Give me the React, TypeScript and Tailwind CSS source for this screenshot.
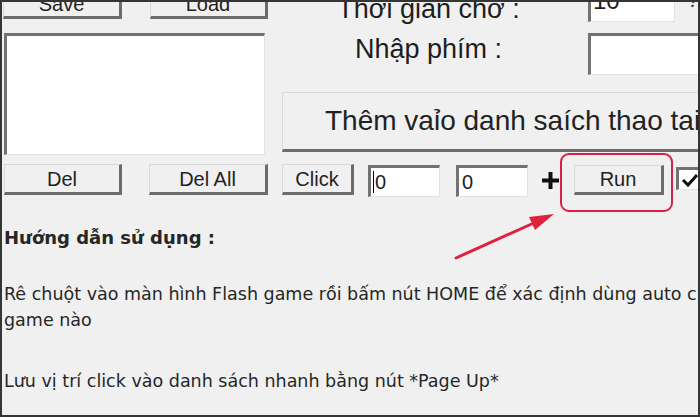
import type { ReactNode } from "react";

const raised =
  "shrink-0 flex items-center justify-center bg-[#f0f0f0] border-t border-l border-t-[#d9d9d9] border-l-[#d9d9d9] border-r-[3px] border-b-[3px] border-r-[#6c6c6c] border-b-[#6c6c6c] text-[20px] text-[#222]";
const sunken =
  "shrink-0 flex items-center bg-white border-t-[3px] border-l-[3px] border-t-[#727272] border-l-[#727272] border-r border-b border-r-[#e2e2e2] border-b-[#e2e2e2]";

function Btn({ className, children }: { className: string; children?: ReactNode }) {
  return <div className={`${raised} ${className}`}>{children}</div>;
}

function Field({ className, children }: { className: string; children?: ReactNode }) {
  return <div className={`${sunken} ${className}`}>{children}</div>;
}

export default function App() {
  return (
    <div className="relative w-[700px] h-[417px] overflow-hidden bg-[#f0f0f0] border-2 border-[#353535] font-['Liberation_Sans',Arial,sans-serif] text-[#1d1d1d]">
      {/* top block */}
      <div className="flex items-start mt-[-22px]">
        <div className="ml-[1px] w-[265px] shrink-0 pt-[8px] flex flex-col">
          <div className="flex gap-[28px] h-[31px]">
            <Btn className="w-[119px] h-[31px] items-start">Save</Btn>
            <Btn className="w-[118px] h-[31px] items-start">Load</Btn>
          </div>
          <Field className="mt-[14px] ml-[1px] w-[261px] h-[122px]" />
        </div>

        <div className="ml-[14px] w-[440px] shrink-0 flex flex-col">
          <div className="flex items-center h-[42px]">
            <div className="w-[293px] shrink-0 text-center text-[27px] leading-none pt-[16px]">Thời gian chờ :</div>
            <Field className="ml-[13px] w-[87px] h-[42px] pl-[2px] text-[24px] items-end pb-[2px]">10</Field>
            <span className="ml-[13px] text-[22px] italic text-[#333] self-end pb-[6px]">?</span>
          </div>
          <div className="flex items-center h-[42px] mt-[11px]">
            <div className="w-[293px] shrink-0 text-center text-[27px] leading-none pb-[10px]">Nhập phím :</div>
            <Field className="ml-[13px] w-[112px] h-[42px]" />
          </div>
          <Btn className="mt-[17px] h-[60px] w-[440px] justify-start pl-[42px] text-[28px] whitespace-nowrap">
            Thêm vaỉo danh saích thao taic
          </Btn>
        </div>
      </div>

      {/* control row */}
      <div className="flex items-start mt-[9px] ml-[2px]">
        <Btn className="w-[118px] h-[31px]">Del</Btn>
        <Btn className="ml-[27px] w-[119px] h-[31px]">Del All</Btn>
        <Btn className="ml-[14px] w-[72px] h-[31px]">Click</Btn>
        <Field className="ml-[14px] mt-[1px] w-[72px] h-[32px] pl-[2px] text-[20px]">
          <span className="w-[1px] h-[22px] bg-black mr-[1px]" />0
        </Field>
        <Field className="ml-[16px] mt-[1px] w-[72px] h-[32px] pl-[3px] text-[20px]">0</Field>
        <svg className="ml-[14px] mt-[8px] shrink-0" width="17" height="17" viewBox="0 0 17 17">
          <rect x="0" y="6.5" width="17" height="4" fill="#111" />
          <rect x="6.5" y="0" width="4" height="17" fill="#111" />
        </svg>
        <Btn className="ml-[15px] mt-[1px] w-[90px] h-[30px]">Run</Btn>
        <Field className="ml-[12px] mt-[3px] w-[30px] h-[23px]">
          <svg className="ml-[2px]" width="18" height="14" viewBox="0 0 18 14">
            <path d="M2 7 L7 12 L16 2" fill="none" stroke="#111" strokeWidth="3" />
          </svg>
        </Field>
      </div>

      {/* instructions */}
      <div className="ml-[2px] mt-[31px] font-['DejaVu_Sans',Verdana,sans-serif] text-[#262626] whitespace-nowrap">
        <p className="text-[18px] leading-[20px] font-bold">Hướng dẫn sử dụng :</p>
        <p className="mt-[33px] text-[17.5px] leading-[26px]">
          Rê chuột vào màn hình Flash game rồi bấm nút HOME để xác định dùng auto chơi
          <br />
          game nào
        </p>
        <p className="mt-[35px] text-[17.5px] leading-[26px]">Lưu vị trí click vào danh sách nhanh bằng nút *Page Up*</p>
      </div>

      {/* annotation */}
      <div className="absolute left-[558px] top-[151px] w-[113px] h-[59px] border-[2.5px] border-[#d6204a] rounded-[9px]" />
      <svg className="absolute left-[-2px] top-[-2px]" width="700" height="417" viewBox="0 0 700 417">
        <line x1="456" y1="258" x2="536" y2="222" stroke="#e0213e" strokeWidth="3" strokeLinecap="round" />
        <polygon points="554,214 535,230 529,217" fill="#e0213e" />
      </svg>
    </div>
  );
}
